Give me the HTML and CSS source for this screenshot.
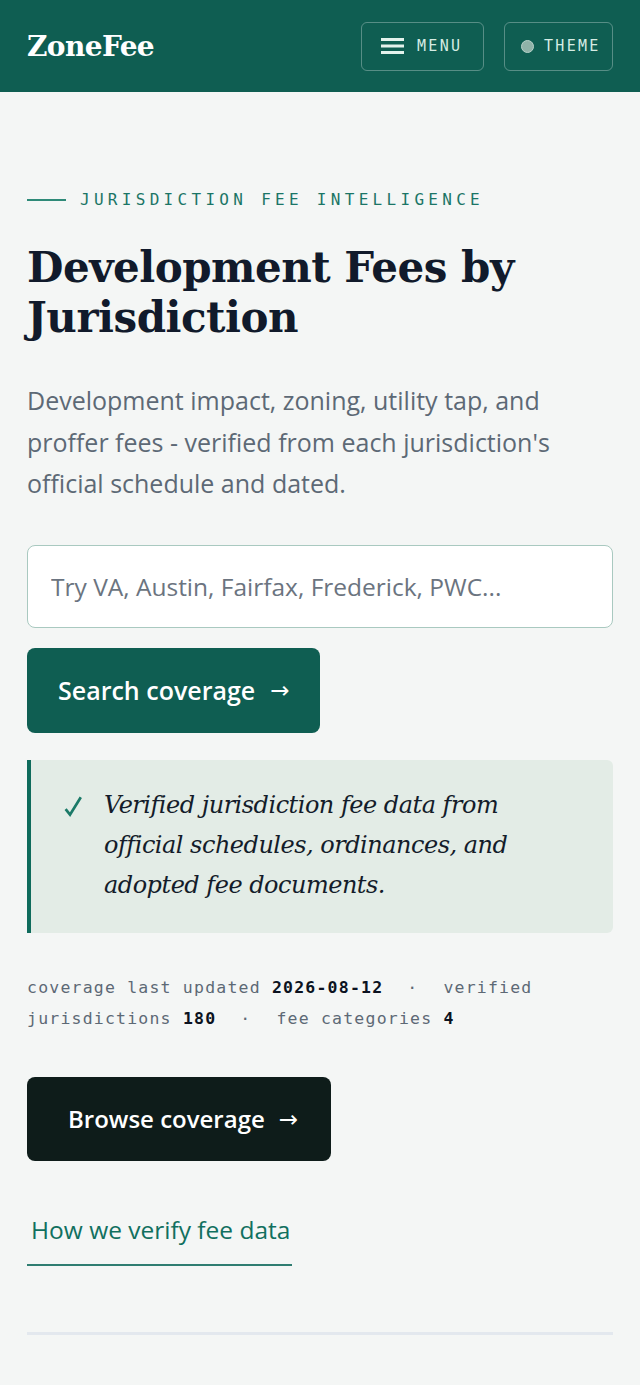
FILE: index.html
```html
<!DOCTYPE html>
<html lang="en">
<head>
<meta charset="utf-8">
<meta name="viewport" content="width=device-width, initial-scale=1">
<title>ZoneFee</title>
<link rel="stylesheet" href="styles.css">
</head>
<body>
<header class="topbar">
  <a class="logo" href="#">ZoneFee</a>
  <div class="actions">
    <button class="chip chip-menu" type="button">
      <svg class="burger" width="23" height="16" viewBox="0 0 23 16" aria-hidden="true">
        <rect x="0" y="0" width="23" height="3" fill="#e3f2ec"/>
        <rect x="0" y="6.5" width="23" height="3" fill="#e3f2ec"/>
        <rect x="0" y="13" width="23" height="3" fill="#e3f2ec"/>
      </svg>
      <span>MENU</span>
    </button>
    <button class="chip chip-theme" type="button">
      <span class="dot"></span>
      <span>THEME</span>
    </button>
  </div>
</header>

<main class="hero">
  <p class="eyebrow"><span class="rule"></span>JURISDICTION FEE INTELLIGENCE</p>
  <h1 class="title">Development Fees by Jurisdiction</h1>
  <p class="lede">Development impact, zoning, utility tap, and proffer fees - verified from each jurisdiction's official schedule and dated.</p>

  <form class="search" onsubmit="return false">
    <input class="search-input" type="text" placeholder="Try VA, Austin, Fairfax, Frederick, PWC...">
    <button class="btn btn-green" type="submit">Search coverage <span class="arrow">→</span></button>
  </form>

  <div class="callout">
    <svg class="check" width="18" height="22" viewBox="0 0 18 22" aria-hidden="true">
      <path d="M1.6 13.2 L6 18.6 L16.8 1.2" fill="none" stroke="#1b7a68" stroke-width="2.7" stroke-linejoin="miter"/>
    </svg>
    <p class="callout-text">Verified jurisdiction fee data from official schedules, ordinances, and adopted fee documents.</p>
  </div>

  <p class="meta"><span>coverage last updated</span> <b>2026-08-12</b><span class="sep">·</span><span>verified</span> <span>jurisdictions</span> <b>180</b><span class="sep">·</span><span>fee categories</span> <b>4</b></p>

  <a class="btn btn-dark" href="#">Browse coverage <span class="arrow">→</span></a>

  <div class="linkrow"><a class="textlink" href="#">How we verify fee data</a></div>

  <hr class="divider">
</main>
</body>
</html>
```

FILE: styles.css
```css
* { box-sizing: border-box; }
html, body { margin: 0; padding: 0; }
body {
  background: #f4f6f5;
  font-family: "Open Sans", "Noto Sans", sans-serif;
  color: #111827;
}

.topbar {
  height: 92px;
  background: #0f5e52;
  display: flex;
  align-items: center;
  justify-content: space-between;
  padding: 0 27px;
}
.logo {
  font-family: "DejaVu Serif", Georgia, serif;
  font-weight: 700;
  font-size: 28px;
  color: #ffffff;
  text-decoration: none;
  letter-spacing: -0.6px;
}
.actions { display: flex; gap: 20px; }
.chip {
  height: 49px;
  display: flex;
  align-items: center;
  background: transparent;
  border: 1.5px solid rgba(255,255,255,0.3);
  border-radius: 6px;
  color: #d6ece4;
  font-family: "DejaVu Sans Mono", monospace;
  font-size: 15px;
  letter-spacing: 2.3px;
  cursor: pointer;
}
.chip-menu { width: 123px; padding: 0 0 0 19px; gap: 13px; }
.chip-theme { width: 109px; padding: 0 0 0 16px; gap: 10px; }
.chip .burger { display: block; }
.chip .dot {
  width: 13px; height: 13px;
  border-radius: 50%;
  background: #8fb2a8;
  border: 1px solid #b8d2ca;
}

.hero { padding: 96px 27px 60px; }

.eyebrow {
  margin: 0;
  display: flex;
  align-items: center;
  gap: 14px;
  font-family: "DejaVu Sans Mono", monospace;
  font-size: 16px;
  line-height: 24px;
  letter-spacing: 4.3px;
  color: #1b7566;
}
.eyebrow .rule {
  width: 39px; height: 2px;
  background: #2e8a78;
}

.title {
  margin: 31px 0 0;
  font-family: "DejaVu Serif", Georgia, serif;
  font-weight: 700;
  font-size: 42px;
  line-height: 50px;
  color: #111a2b;
  letter-spacing: -0.5px;
}

.lede {
  margin: 37px 0 0;
  font-size: 25px;
  line-height: 41.5px;
  color: #5d6975;
}

.search { margin: 40px 0 0; }
.search-input {
  display: block;
  width: 100%;
  height: 83px;
  padding: 0 23px;
  background: #ffffff;
  border: 1.5px solid #a9c9c0;
  border-radius: 8px;
  font-family: "Open Sans", sans-serif;
  font-size: 24.5px;
  color: #111827;
  outline: none;
}
.search-input::placeholder { color: #6b7480; }

.btn {
  display: inline-flex;
  align-items: center;
  gap: 15px;
  border: none;
  border-radius: 8px;
  color: #ffffff;
  font-family: "Open Sans", sans-serif;
  font-weight: 600;
  font-size: 25px;
  text-decoration: none;
  cursor: pointer;
}
.btn .arrow { font-family: "DejaVu Sans", sans-serif; font-weight: 400; font-size: 23px; }
.btn-green {
  margin-top: 20px;
  height: 85px;
  padding: 0 30px 0 31px;
  background: #0f5e52;
}
.btn-dark {
  margin-top: 43px;
  height: 84px;
  padding: 0 33px 0 41px;
  font-size: 24px;
  gap: 14px;
  background: #0e1c1a;
}

.callout {
  margin-top: 27px;
  display: flex;
  align-items: flex-start;
  gap: 22px;
  padding: 25px 30px 28px 33px;
  background: #e3ece6;
  border-left: 4px solid #0f6b5c;
  border-radius: 0 6px 6px 0;
}
.check {
  flex: none;
  display: block;
  margin-top: 11px;
}
.callout-text {
  margin: 0;
  font-family: "DejaVu Serif", Georgia, serif;
  font-style: italic;
  font-size: 24px;
  line-height: 40px;
  color: #141c2a;
  letter-spacing: -0.5px;
}

.meta {
  margin: 39px 0 0;
  font-family: "DejaVu Sans Mono", monospace;
  font-size: 16.5px;
  line-height: 31px;
  letter-spacing: 1.2px;
  color: #5d6975;
}
.meta b { color: #0b1220; font-weight: 700; }
.meta .sep { margin: 0 25px 0 24px; }

.linkrow { margin-top: 53px; }
.textlink {
  display: inline-block;
  padding: 0 2px 18px 4px;
  border-bottom: 2px solid #2f7d71;
  color: #11705f;
  font-family: "Open Sans", sans-serif;
  font-weight: 500;
  font-size: 24.5px;
  line-height: 32px;
  text-decoration: none;
}

.divider {
  margin: 66px 0 0;
  border: none;
  height: 3px;
  background: #e3e8ee;
}
```
